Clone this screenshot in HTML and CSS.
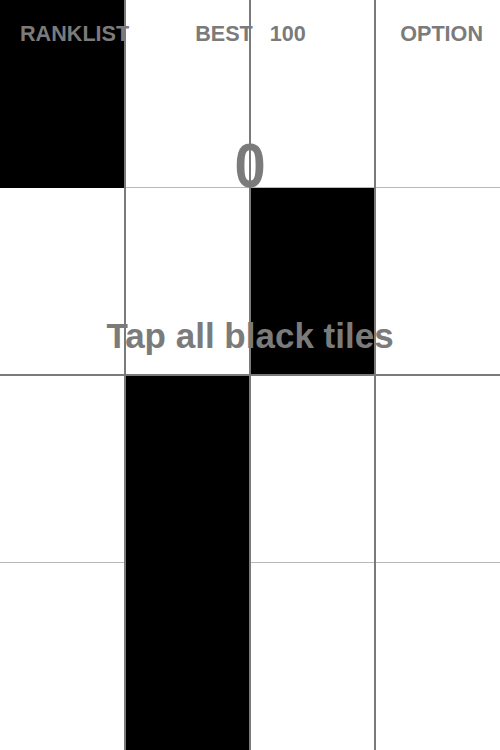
FILE: index.html
```html
<!DOCTYPE html>
<html>
<head>
<meta charset="utf-8">
<link rel="stylesheet" href="styles.css">
</head>
<body>
<div class="board">
  <div class="tiles">
    <div class="tile black"></div><div class="tile"></div><div class="tile"></div><div class="tile"></div>
    <div class="tile"></div><div class="tile"></div><div class="tile black"></div><div class="tile"></div>
    <div class="tile"></div><div class="tile black"></div><div class="tile"></div><div class="tile"></div>
    <div class="tile"></div><div class="tile black"></div><div class="tile"></div><div class="tile"></div>
  </div>
  <div class="hline h1"></div>
  <div class="hline h2"></div>
  <div class="hline h3"></div>
  <div class="header">
    <span class="rank">RANKLIST</span>
    <span class="best">BEST</span>
    <span class="bestval">100</span>
    <span class="option">OPTION</span>
  </div>
  <div class="score">0</div>
  <div class="hint">Tap all black tiles</div>
  <div class="vline v1"></div>
  <div class="vline v2"></div>
  <div class="vline v3"></div>
</div>
</body>
</html>
```
FILE: styles.css
```css
html, body {
  margin: 0;
  padding: 0;
  background: #ffffff;
}
.board {
  position: relative;
  width: 500px;
  height: 750px;
  overflow: hidden;
  font-family: "Liberation Sans", Arial, sans-serif;
  font-weight: bold;
  color: #7b7b7b;
}
.tiles {
  display: grid;
  grid-template-columns: repeat(4, 125px);
  grid-template-rows: repeat(4, 187.5px);
  width: 500px;
  height: 750px;
}
.tile {
  background: #ffffff;
}
.tile.black {
  position: relative;
  z-index: 1;
  background: #000000;
}
.hline {
  position: absolute;
  left: 0;
  right: 0;
  height: 1px;
  z-index: 0;
}
.h1 { top: 187px; background: #b8b8b8; }
.h2 { top: 374px; height: 2px; background: #7a7a7a; z-index: 2; }
.h3 { top: 562px; background: #b8b8b8; }
.header {
  position: absolute;
  z-index: 3;
  top: 0;
  left: 0;
  right: 0;
  display: flex;
  padding: 23px 17px 0 20px;
  font-size: 21.6px;
  line-height: 21px;
}
.best {
  margin-left: 66px;
}
.bestval {
  margin-left: 17px;
}
.option {
  margin-left: auto;
}
.score {
  position: absolute;
  z-index: 3;
  left: 0;
  right: 0;
  top: 139.6px;
  text-align: center;
  font-size: 56px;
  line-height: 56px;
  transform: scaleY(1.12);
  transform-origin: 50% 47.4px;
}
.hint {
  position: absolute;
  z-index: 3;
  left: 0;
  right: 0;
  top: 318px;
  text-align: center;
  font-size: 35px;
  line-height: 35px;
}
.vline {
  position: absolute;
  z-index: 4;
  top: 0;
  bottom: 0;
  width: 2px;
  background: #7a7a7a;
}
.v1 { left: 124px; }
.v2 { left: 249px; }
.v3 { left: 374px; }
```
